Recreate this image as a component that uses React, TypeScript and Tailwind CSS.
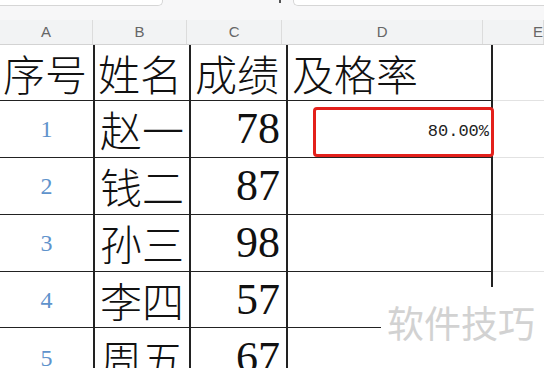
const letters = [
  { l: "A", w: "w-[95px]" },
  { l: "B", w: "w-[96px]" },
  { l: "C", w: "w-[97px]" },
  { l: "D", w: "w-[205px]" },
  { l: "E", w: "flex-1" },
];

const rows = [
  { n: "1", name: "赵一", score: "78", rate: "80.00%", h: "h-[57px]" },
  { n: "2", name: "钱二", score: "87", h: "h-[57px]" },
  { n: "3", name: "孙三", score: "98", h: "h-[57px]" },
  { n: "4", name: "李四", score: "57", h: "h-[56px]" },
  { n: "5", name: "周五", score: "67", h: "h-[60px]" },
];

const cjk = "font-['Noto_Sans_CJK_SC',sans-serif] font-light";
const serif = "font-['Liberation_Serif',serif]";

export default function App() {
  return (
    <div className="relative w-[544px] h-[368px] overflow-hidden bg-white">
      {/* toolbar strip */}
      <div className="flex h-[20px] bg-[#f7f7f8]">
        <div className="w-[163px] h-[6px] bg-white border-b border-r border-[#d6d6d6] rounded-br-[5px]" />
        <div className="w-[130px] flex justify-end pr-[12px]">
          <div className="w-[2px] h-[3px] bg-[#555]" />
        </div>
        <div className="flex-1 h-[6px] bg-white border-b border-l border-[#d6d6d6] rounded-bl-[5px]" />
      </div>

      {/* column letters */}
      <div className="flex h-[25px] bg-[#f2f3f4] border-b border-[#d3d3d3] text-[15px] text-[#666] font-['Liberation_Sans',sans-serif]">
        {letters.map((c) => (
          <div
            key={c.l}
            className={`${c.w} flex items-center justify-center border-r border-[#dcdcdc]`}
          >
            <span className={c.l === "E" ? "ml-[50px]" : ""}>{c.l}</span>
          </div>
        ))}
      </div>

      {/* title row */}
      <div className={`flex h-[56px] ${cjk} text-[42px] leading-none text-[#111]`}>
        <div className="w-[95px] flex items-center pl-[3px] border-r-2 border-b border-[#222]">序号</div>
        <div className="w-[96px] flex items-center pl-[3px] border-r-2 border-b border-[#222]">姓名</div>
        <div className="w-[97px] flex items-center pl-[4px] border-r-2 border-b border-[#222]">成绩</div>
        <div className="w-[205px] flex items-center pl-[4px] border-r-2 border-b border-[#222]">及格率</div>
        <div className="flex-1 border-b border-[#e2e2e2]" />
      </div>

      {rows.map((r) => (
        <div key={r.n} className={`flex ${r.h}`}>
          <div className={`w-[95px] flex items-center justify-center border-r-2 border-b border-[#222] ${serif} text-[24px] text-[#5f93cc]`}>
            {r.n}
          </div>
          <div className={`w-[96px] flex items-center pl-[5px] border-r-2 border-b border-[#222] ${cjk} text-[42px] leading-none text-[#111]`}>
            {r.name}
          </div>
          <div className={`w-[97px] flex items-center justify-end pr-[6px] border-r-2 border-b border-[#222] ${serif} text-[44px] leading-none text-[#111]`}>
            {r.score}
          </div>
          <div className="relative w-[205px] border-r-2 border-b border-[#222]">
            {r.rate && (
              <div className="absolute left-[25px] top-[6px] w-[181px] h-[50px] border-[3px] border-[#e3201b] rounded-[4px] flex items-center justify-end pr-[2px] font-['Liberation_Mono',monospace] text-[17px] text-[#222]">
                {r.rate}
              </div>
            )}
          </div>
          <div className="flex-1 border-b border-[#e2e2e2]" />
        </div>
      ))}

      {/* watermark */}
      <div className="absolute left-[381px] top-[287px] right-0 bottom-0 bg-white pl-[6px] pt-[17px] font-['Noto_Sans_CJK_SC',sans-serif] text-[37px] leading-none text-[#d2d2d2]">
        软件技巧
      </div>
    </div>
  );
}
